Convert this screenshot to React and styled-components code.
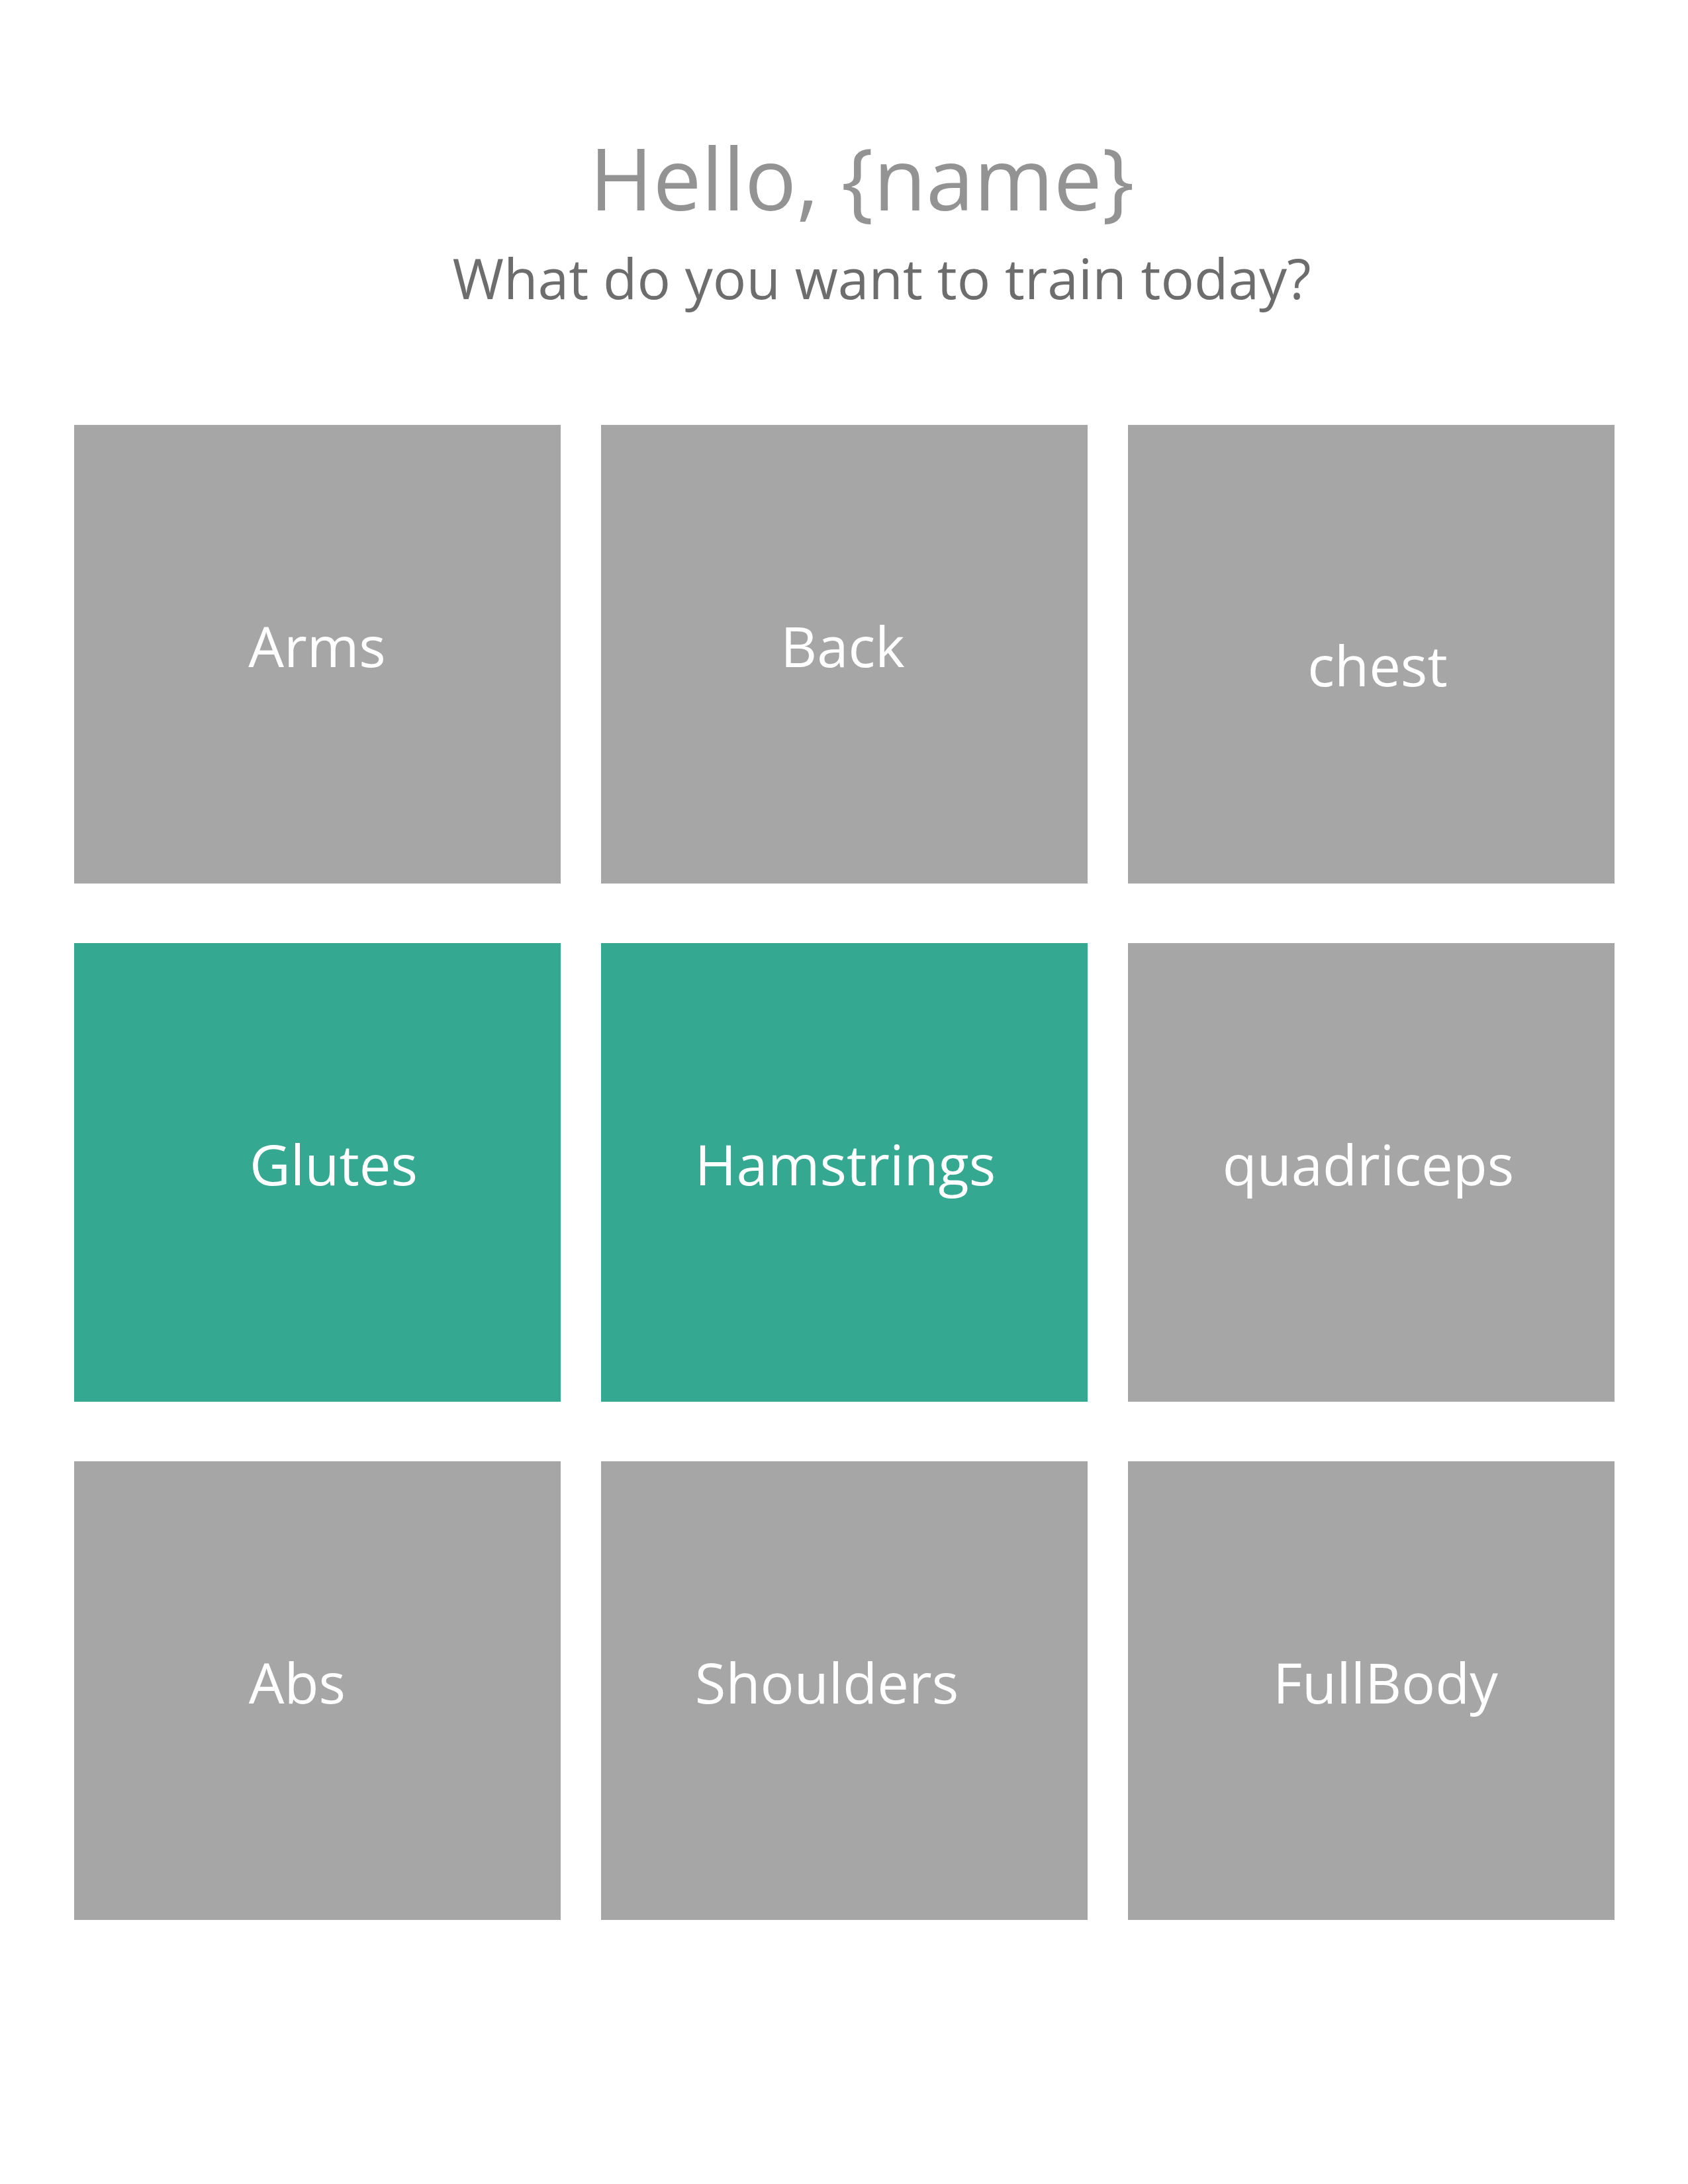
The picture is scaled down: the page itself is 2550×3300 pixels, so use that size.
import styled, { createGlobalStyle } from "styled-components";

const GlobalStyle = createGlobalStyle`
  html, body {
    margin: 0;
    padding: 0;
    background: #ffffff;
  }
  body {
    font-family: "Open Sans", "Noto Sans", sans-serif;
  }
`;

const Page = styled.div`
  width: 2550px;
  min-height: 3300px;
  background: #ffffff;
  padding-top: 203px;
  box-sizing: border-box;
`;

const Header = styled.header`
  display: flex;
  flex-direction: column;
  align-items: center;
`;

const Title = styled.h1`
  margin: 0;
  padding-left: 54px;
  font-size: 130px;
  line-height: 130px;
  font-weight: 400;
  color: #939393;
`;

const Subtitle = styled.h2`
  margin: 45px 0 0;
  padding-left: 114px;
  font-size: 84px;
  line-height: 84px;
  font-weight: 400;
  color: #6d6d6d;
`;

const Grid = styled.div`
  display: grid;
  grid-template-columns: repeat(3, 735px);
  grid-auto-rows: 693px;
  column-gap: 61px;
  row-gap: 90px;
  justify-content: center;
  margin-top: 180px;
`;

const Tile = styled.button`
  display: flex;
  align-items: center;
  justify-content: center;
  border: none;
  padding: 0 0 26px;
  margin: 0;
  background: ${(p) => (p.$selected ? "#35a892" : "#a6a6a6")};
  cursor: pointer;
  font-family: inherit;
`;

const Label = styled.span`
  font-size: 85px;
  line-height: 85px;
  color: #ffffff;
  transform: translate(${(p) => p.$dx || 0}px, ${(p) => p.$dy || 0}px);
`;

const muscles = [
  { name: "Arms", dx: 0 },
  { name: "Back", dx: -2 },
  { name: "chest", dx: 10, dy: 29 },
  { name: "Glutes", dx: 25, selected: true },
  { name: "Hamstrings", dx: 2, selected: true },
  { name: "quadriceps", dx: -4 },
  { name: "Abs", dx: -30 },
  { name: "Shoulders", dx: -26 },
  { name: "FullBody", dx: 22 },
];

function App() {
  return (
    <Page>
      <GlobalStyle />
      <Header>
        <Title>Hello, {"{name}"}</Title>
        <Subtitle>What do you want to train today?</Subtitle>
      </Header>
      <Grid>
        {muscles.map((m) => (
          <Tile key={m.name} $selected={m.selected}>
            <Label $dx={m.dx} $dy={m.dy}>
              {m.name}
            </Label>
          </Tile>
        ))}
      </Grid>
    </Page>
  );
}

export default App;
